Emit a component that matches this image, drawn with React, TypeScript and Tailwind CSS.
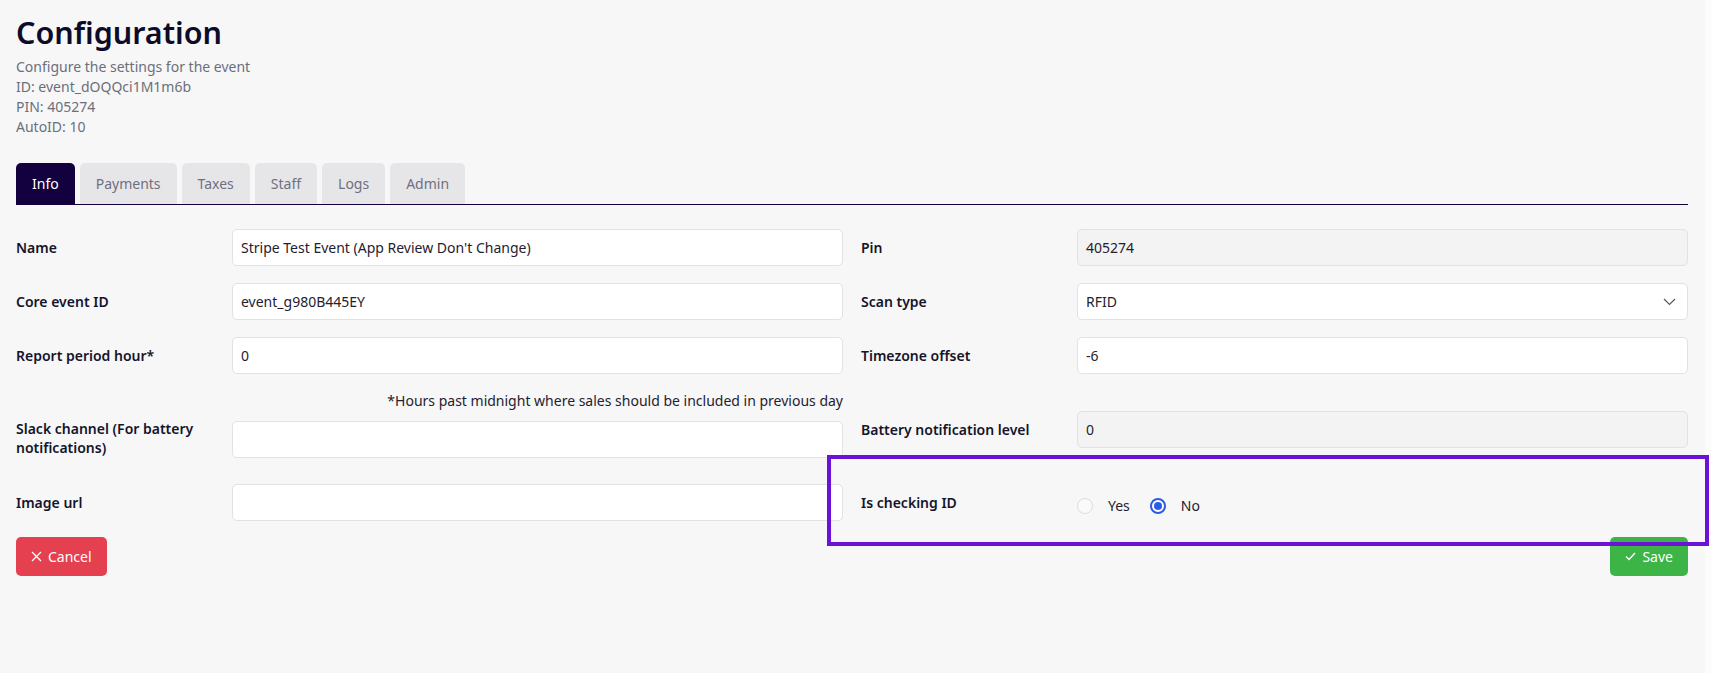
import React from "react";

function Field({
  label,
  value,
  gray,
  select,
}: {
  label: string;
  value?: string;
  gray?: boolean;
  select?: boolean;
}) {
  return (
    <div className="flex items-center">
      <label className="w-[216px] shrink-0 pr-4 text-sm font-semibold leading-[19px] text-[#14142b]">
        {label}
      </label>
      <div
        className={
          "flex h-[37px] min-w-0 flex-1 items-center justify-between rounded-[5px] border border-[#e2e2e2] px-2 text-sm text-[#1f2130] " +
          (gray ? "bg-[#f3f3f3]" : "bg-white")
        }
      >
        <span>{value}</span>
        {select && (
          <svg width="13" height="8" viewBox="0 0 13 8" className="mr-[3px]">
            <polyline points="1,1 6.5,6.5 12,1" fill="none" stroke="#5a5a5a" strokeWidth="1.2" />
          </svg>
        )}
      </div>
    </div>
  );
}

function Radio({ checked, label }: { checked?: boolean; label: string }) {
  return (
    <div className="flex items-center">
      {checked ? (
        <span className="flex h-4 w-4 items-center justify-center rounded-full border-2 border-[#2b5ce6] bg-white">
          <span className="h-[8px] w-[8px] rounded-full bg-[#2b5ce6]" />
        </span>
      ) : (
        <span className="h-4 w-4 rounded-full border border-[#dcdcdc] bg-[#fafafa]" />
      )}
      <span className="ml-[15px] text-sm text-[#1f2130]">{label}</span>
    </div>
  );
}

export default function App() {
  const tabs = ["Info", "Payments", "Taxes", "Staff", "Logs", "Admin"];
  return (
    <div className="relative flex min-h-screen bg-[#f7f7f7] font-['Noto_Sans','Open_Sans',sans-serif]">
      <div className="flex-1 pl-4 pr-[17px] pt-3">
        <h1 className="text-[30.5px] font-semibold leading-10 text-[#0c0b29]">Configuration</h1>
        <div className="mt-[5px] text-sm leading-5 text-[#6b6f7b]">
          <p>Configure the settings for the event</p>
          <p>ID: event_dOQQci1M1m6b</p>
          <p>PIN: 405274</p>
          <p>AutoID: 10</p>
        </div>

        <div className="mt-[26px] flex gap-[5px] border-b border-[#13003e]">
          {tabs.map((t, i) => (
            <div
              key={t}
              className={
                "flex h-[41px] items-center rounded-t-[5px] px-4 text-sm " +
                (i === 0 ? "bg-[#13003e] text-white" : "bg-[#e6e6e9] text-[#6e7080]")
              }
            >
              {t}
            </div>
          ))}
        </div>

        <div className="mt-[24px] grid grid-cols-2 items-start gap-x-[18px]">
          <div className="flex flex-col">
            <Field label="Name" value="Stripe Test Event (App Review Don't Change)" />
            <div className="mt-[17px]">
              <Field label="Core event ID" value="event_g980B445EY" />
            </div>
            <div className="mt-[17px]">
              <Field label="Report period hour*" value="0" />
            </div>
            <p className="mt-[17px] text-right text-sm leading-5 text-[#1f2130]">
              *Hours past midnight where sales should be included in previous day
            </p>
            <div className="mt-[8px] flex items-start">
              <label className="w-[216px] shrink-0 pr-4 text-sm font-semibold leading-[19px] text-[#14142b]">
                Slack channel (For battery notifications)
              </label>
              <div className="mt-[2px] h-[37px] min-w-0 flex-1 rounded-[5px] border border-[#e2e2e2] bg-white" />
            </div>
            <div className="mt-[26px]">
              <Field label="Image url" value="" />
            </div>
          </div>

          <div className="flex flex-col">
            <Field label="Pin" value="405274" gray />
            <div className="mt-[17px]">
              <Field label="Scan type" value="RFID" select />
            </div>
            <div className="mt-[17px]">
              <Field label="Timezone offset" value="-6" />
            </div>
            <div className="mt-[37px]">
              <Field label="Battery notification level" value="0" gray />
            </div>
            <div className="mt-[36px] flex h-[37px] items-center">
              <label className="w-[216px] shrink-0 pr-4 text-sm font-semibold leading-[19px] text-[#14142b]">
                Is checking ID
              </label>
              <div className="mt-[6px] flex items-center gap-5">
                <Radio label="Yes" />
                <Radio label="No" checked />
              </div>
            </div>
          </div>
        </div>

        <div className="mt-4 flex justify-between">
          <button className="flex h-[39px] items-center gap-[6px] rounded-[5px] bg-[#e5404f] px-[15px] text-sm text-white">
            <svg width="11" height="11" viewBox="0 0 11 11">
              <path d="M1 1L10 10M10 1L1 10" stroke="white" strokeWidth="1.3" />
            </svg>
            Cancel
          </button>
          <button className="flex h-[39px] items-center gap-[6px] rounded-[5px] bg-[#3db446] px-[15px] text-sm text-white">
            <svg width="11" height="9" viewBox="0 0 11 9">
              <path d="M1 4.5L4 7.5L10 1" fill="none" stroke="white" strokeWidth="1.3" />
            </svg>
            Save
          </button>
        </div>
      </div>
      <div className="w-[6px] bg-[#fcfcfc]" />

      <div className="pointer-events-none absolute left-[827px] top-[455px] h-[91px] w-[882px] border-4 border-[#6c12d6]" />
    </div>
  );
}
